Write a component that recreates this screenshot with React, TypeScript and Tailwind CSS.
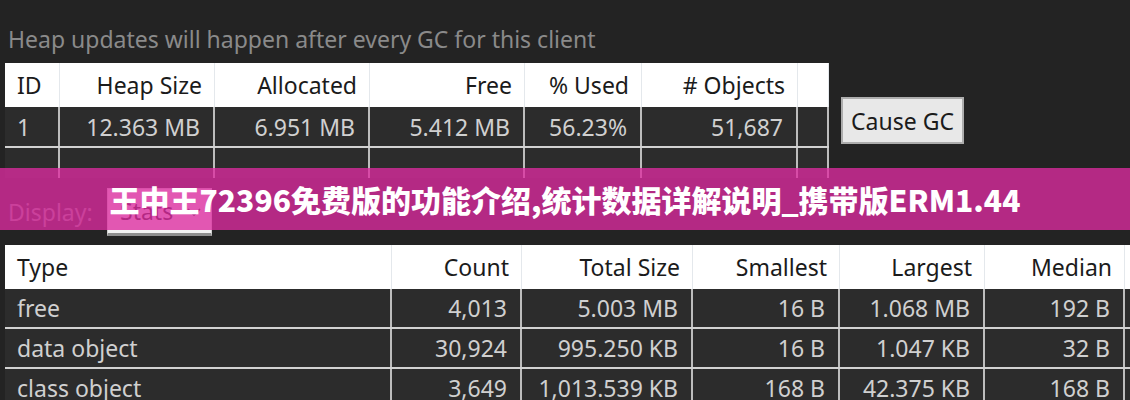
import React from "react";

const topCols = [
  { w: "w-[55px]", label: "ID", align: "left" },
  { w: "w-[155px]", label: "Heap Size", align: "right" },
  { w: "w-[155px]", label: "Allocated", align: "right" },
  { w: "w-[155px]", label: "Free", align: "right" },
  { w: "w-[117px]", label: "% Used", align: "right" },
  { w: "w-[156px]", label: "# Objects", align: "right" },
  { w: "w-[31px]", label: "", align: "right" },
];

const topRows = [["1", "12.363 MB", "6.951 MB", "5.412 MB", "56.23%", "51,687", ""]];

const botCols = [
  { w: "w-[387px]", label: "Type", align: "left" },
  { w: "w-[130px]", label: "Count", align: "right" },
  { w: "w-[171px]", label: "Total Size", align: "right" },
  { w: "w-[147px]", label: "Smallest", align: "right" },
  { w: "w-[145px]", label: "Largest", align: "right" },
  { w: "w-[140px]", label: "Median", align: "right" },
  { w: "w-[40px]", label: "", align: "right" },
];

const botRows = [
  ["free", "4,013", "5.003 MB", "16 B", "1.068 MB", "192 B", ""],
  ["data object", "30,924", "995.250 KB", "16 B", "1.047 KB", "32 B", ""],
  ["class object", "3,649", "1,013.539 KB", "168 B", "42.375 KB", "168 B", ""],
];

type Col = { w: string; label: string; align: string };

function HeaderRow({ cols }: { cols: Col[] }) {
  return (
    <div className="flex h-[44px] bg-white">
      {cols.map((c, i) => (
        <div
          key={i}
          className={`${c.w} shrink-0 h-full flex items-center border-r border-[#e4e8ec] text-[#1b1b1b] ${
            c.align === "left" ? "justify-start pl-[12px]" : "justify-end pr-[12px]"
          }`}
        >
          {c.label}
        </div>
      ))}
    </div>
  );
}

function BodyRow({ cols, cells, h }: { cols: Col[]; cells: string[]; h: string }) {
  return (
    <div className={`flex ${h} bg-[#2c2c2c]`}>
      {cols.map((c, i) => (
        <div
          key={i}
          className={`${c.w} shrink-0 h-full flex items-center border-r-2 border-[#bdbdbd] text-[#d0d0d0] ${
            c.align === "left" ? "justify-start pl-[12px]" : "justify-end pr-[13px]"
          }`}
        >
          {cells[i]}
        </div>
      ))}
    </div>
  );
}

function Sep() {
  return <div className="h-[2px] bg-[#d2d2d2]" />;
}

export default function App() {
  return (
    <div className="relative w-[1130px] h-[400px] overflow-hidden bg-[#232323] font-['Noto_Sans',sans-serif] text-[23px] leading-[30px]">
      <div className="h-[63px] pl-[8px] pt-[24px] text-[#8a8a8a] whitespace-nowrap">
        Heap updates will happen after every GC for this client
      </div>

      <div className="flex items-start pl-[5px]">
        <div className="flex flex-col w-[824px] shrink-0">
          <HeaderRow cols={topCols} />
          <BodyRow cols={topCols} cells={topRows[0]} h="h-[39px]" />
          <Sep />
          <BodyRow cols={topCols} cells={["", "", "", "", "", "", ""]} h="h-[30px]" />
        </div>
        <button className="ml-[12px] mt-[34px] w-[123px] h-[47px] shrink-0 bg-[#e8e8e8] border-2 border-[#adadad] text-[#1b1b1b] flex items-center justify-center">
          Cause GC
        </button>
      </div>

      <div className="flex items-center h-[67px] pl-[8px]">
        <span className="text-[#8a8a8a] w-[99px]">Display:</span>
        <div className="w-[105px] h-[48px] bg-[#f2f2f2] border border-[#cfcfcf] border-b-[3px] border-b-[#8e8e8e] flex items-center justify-between pl-[12px] pr-[10px] text-[#1b1b1b]">
          <span>Stats</span>
          <svg width="14" height="9" viewBox="0 0 14 9" className="mt-[4px]">
            <polyline points="1,1 7,7 13,1" fill="none" stroke="#333" strokeWidth="1.6" />
          </svg>
        </div>
      </div>

      <div className="flex flex-col pl-[5px] w-[1180px]">
        <HeaderRow cols={botCols} />
        <BodyRow cols={botCols} cells={botRows[0]} h="h-[38px]" />
        <Sep />
        <BodyRow cols={botCols} cells={botRows[1]} h="h-[38px]" />
        <Sep />
        <BodyRow cols={botCols} cells={botRows[2]} h="h-[38px]" />
      </div>

      <div className="absolute left-0 right-0 top-[168px] h-[62px] bg-[rgba(222,44,160,0.78)] flex items-center justify-center">
        <span className="text-white font-black text-[30px] leading-none whitespace-nowrap font-['Noto_Sans_CJK_SC','Noto_Sans',sans-serif]">
          王中王72396免费版的功能介绍,统计数据详解说明_携带版ERM1.44
        </span>
      </div>
    </div>
  );
}
